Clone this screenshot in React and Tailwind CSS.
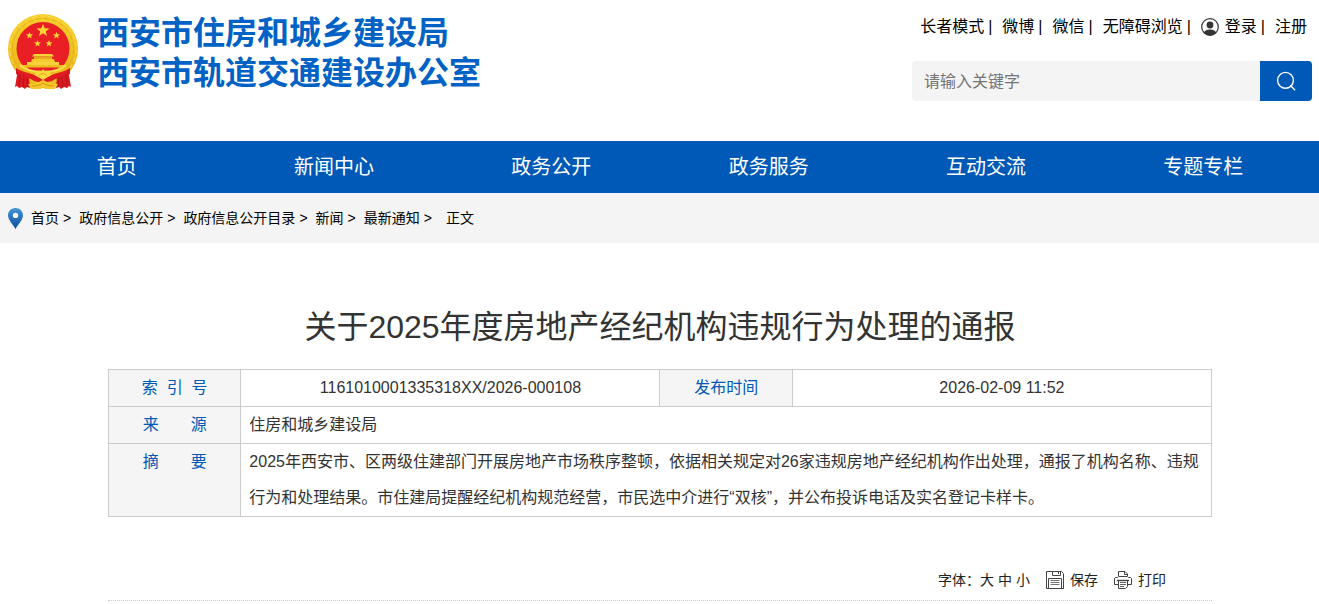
import { useState } from "react";

const NAV_ITEMS = ["首页", "新闻中心", "政务公开", "政务服务", "互动交流", "专题专栏"];

const CRUMBS = ["首页", "政府信息公开", "政府信息公开目录", "新闻", "最新通知"];

function Star({ x, y, r }) {
  const points = [];
  for (let i = 0; i < 10; i++) {
    const radius = i % 2 === 0 ? r : r * 0.42;
    const angle = (Math.PI / 5) * i - Math.PI / 2;
    points.push(
      `${(x + radius * Math.cos(angle)).toFixed(2)},${(y + radius * Math.sin(angle)).toFixed(2)}`
    );
  }
  return <polygon points={points.join(" ")} fill="#fbd534" />;
}

function Emblem() {
  return (
    <svg width="70" height="78" viewBox="0 0 70 78" aria-hidden="true">
      <defs>
        <linearGradient id="gold" x1="0" y1="0" x2="0" y2="1">
          <stop offset="0" stopColor="#f7cf2c" />
          <stop offset="0.6" stopColor="#f0c01f" />
          <stop offset="1" stopColor="#e5a816" />
        </linearGradient>
      </defs>
      <circle cx="35" cy="36" r="35" fill="url(#gold)" />
      <circle cx="35" cy="36" r="30.500" fill="none" stroke="#dba818" strokeWidth="0.8" strokeDasharray="6 2" />
      <circle cx="35" cy="36" r="33" fill="none" stroke="#fbe05a" strokeWidth="0.8" strokeDasharray="5 3" />
      <circle cx="35" cy="35.5" r="26.5" fill="#e91f25" />
      <Star x={35} y={17.5} r={6.8} />
      <Star x={21.5} y={22.5} r={3.8} />
      <Star x={48.5} y={22.5} r={3.8} />
      <Star x={29.5} y={30.5} r={3.6} />
      <Star x={41} y={30.5} r={3.6} />
      {/* gate tower */}
      <path d="M26 41h18l2 2.5H24z" fill="#f9d33a" />
      <path d="M26 43.500h18v3H26z" fill="#e3ad1c" />
      <path d="M24 46h22l1 3.500H23z" fill="#f6c92c" />
      <path d="M19 49h32v4.500H19z" fill="#f9d33a" />
      <path d="M19 53.500h32v1H19z" fill="#d4930e" />
      {/* lower wreath */}
      <path d="M10 52h50l-9 18-5 5H24l-5-5z" fill="#efbc20" />
      <path d="M19 54.500h32l-5 4H24z" fill="#e91f25" />
      <path d="M12 52c6 6 14 7 23 7s17-1 23-7" fill="none" stroke="#fadb48" strokeWidth="2" />
      {/* red swag and drapes */}
      <path d="M8 55c8 5 16 5 20 8l7 3 7-3c4-3 12-3 20-8v6c-7 4-13 3-18 7l-9 2-9-2c-5-4-11-3-18-7z" fill="#e01c22" />
      <path d="M8 55c3 6 7 8 13 9l1 11-3-1-2 2-3-2-3 1-2-2-2 1 2-12z" fill="#d81920" />
      <path d="M62 55c-3 6-7 8-13 9l-1 11 3-1 2 2 3-2 3 1 2-2 2 1-2-12z" fill="#d81920" />
      <path d="M12 62l-1 11M16 64l-1 10M19.500 66v8M58 62l1 11M54 64l1 10M50.500 66v8" stroke="#ae1118" strokeWidth="0.8" />
      {/* cog */}
      <path d="M27 62l1.500-3 2 .5 1-2 2 .5 1.500-2 1.500 2 2-.5 1 2 2-.5L43 62l-8 5z" fill="#fbd93c" />
      <path d="M31 63c1-3 7-3 8 0" fill="none" stroke="#d99a12" strokeWidth="0.8" />
      {/* lower gold ribbon */}
      <path d="M20 71c6 0 9-1 15-4 6 3 9 4 15 4l-3 5H37l-2-2-2 2H23z" fill="#f5c529" />
      <path d="M24 73c5 0 8-1 11-3 3 2 6 3 11 3" fill="none" stroke="#cf8a10" strokeWidth="0.8" />
    </svg>
  );
}

function UserIcon() {
  return (
    <svg width="18" height="18" viewBox="0 0 18 18" aria-hidden="true">
      <clipPath id="userClip">
        <circle cx="9" cy="9" r="8.500" />
      </clipPath>
      <circle cx="9" cy="7" r="3.400" fill="#333" />
      <ellipse cx="9" cy="15.500" rx="6.500" ry="4" fill="#333" clipPath="url(#userClip)" />
      <circle cx="9" cy="9" r="8.300" fill="none" stroke="#333" strokeWidth="1.200" />
    </svg>
  );
}

function SearchIcon() {
  return (
    <svg width="20" height="20" viewBox="0 0 20 20" fill="none" stroke="#fff" strokeWidth="1.400" aria-hidden="true">
      <circle cx="9.500" cy="9.300" r="7.900" />
      <path d="M14.700 14.700l4 4" strokeLinecap="round" />
    </svg>
  );
}

function PinIcon() {
  return (
    <svg width="15" height="21" viewBox="0 0 15 21" aria-hidden="true">
      <defs>
        <linearGradient id="pin" x1="0" y1="0" x2="0" y2="1">
          <stop offset="0" stopColor="#4795d6" />
          <stop offset="1" stopColor="#0a4d9c" />
        </linearGradient>
      </defs>
      <path
        fillRule="evenodd"
        fill="url(#pin)"
        d="M7.500 0C3.300 0 0 3.200 0 7.300 0 12 5 16.500 7.500 21 10 16.500 15 12 15 7.300 15 3.200 11.700 0 7.500 0zm0 4.700a2.700 2.700 0 1 1 0 5.400 2.700 2.700 0 0 1 0-5.400z"
      />
    </svg>
  );
}

function SaveIcon() {
  return (
    <svg width="18" height="18" viewBox="0 0 18 18" fill="none" stroke="#444" aria-hidden="true">
      <path d="M.500.500h15l2 2v15H.500z" />
      <path d="M6.500.500v4h8v-4" />
      <path d="M12.500 1v2" />
      <path d="M2.500 17.500v-10h13v10" />
      <path d="M4.500 9.500h9M4.500 11.500h9M4.500 13.500h9" stroke="#777" />
    </svg>
  );
}

function PrintIcon() {
  return (
    <svg width="18" height="18" viewBox="0 0 18 18" fill="none" stroke="#444" aria-hidden="true">
      <path d="M4.500 5V.500h6.500L13.500 3v2" />
      <path d="M10.500.500v3h3" />
      <path d="M4 13.500H.500V7.500l1-1h2l1-1h9l1 1h2l1 1v6H14" />
      <path d="M3 9.500h12" strokeWidth="1.400" />
      <path d="M4.500 9.500v8h7l2-2v-6" />
      <path d="M6 11.500h6M6 13.500h6M6 15.500h4" stroke="#666" />
    </svg>
  );
}

function TopLink({ children, last }) {
  return (
    <span className="flex items-center gap-1 whitespace-nowrap">
      <a href="#" className="flex items-center gap-1.5">
        {children}
      </a>
      {!last && <span>|</span>}
    </span>
  );
}

function App() {
  const [keyword, setKeyword] = useState("");
  const [size, setSize] = useState("text-base/9");

  const labelCell = "w-[12%] border border-[#ccc] bg-[#f5f5f5] px-2 text-center align-top font-normal text-[#0059b6]";
  const valueCell = "border border-[#ccc] px-2";

  return (
    <div className="min-h-screen bg-white font-['Liberation_Sans','Noto_Sans_CJK_SC',sans-serif] text-black" lang="zh-CN">
      <header className="flex items-start justify-between pt-[13px] pr-[7px] pb-10 pl-2">
        <a href="#" className="flex items-start gap-[19px]">
          <Emblem />
          <span className="text-[32px] leading-10 font-bold whitespace-nowrap text-[#0062c4]">
            西安市住房和城乡建设局
            <br />
            西安市轨道交通建设办公室
          </span>
        </a>
        <div className="w-[400px]">
          <div className="flex h-7 items-center justify-end gap-[10px] pr-[5px]">
            <TopLink>长者模式</TopLink>
            <TopLink>微博</TopLink>
            <TopLink>微信</TopLink>
            <TopLink>无障碍浏览</TopLink>
            <TopLink>
              <UserIcon />
              登录
            </TopLink>
            <TopLink last>注册</TopLink>
          </div>
          <form className="mt-5 flex h-10" onSubmit={(e) => e.preventDefault()}>
            <input
              type="text"
              aria-label="请输入关键字"
              placeholder="请输入关键字"
              value={keyword}
              onChange={(e) => setKeyword(e.target.value)}
              className="min-w-0 flex-1 rounded-l bg-[#f4f4f4] px-3 pt-0.5 outline-none placeholder:text-[#757575]"
            />
            <button type="submit" aria-label="搜索" className="flex w-[52px] items-center justify-center rounded-r bg-[#0059b6]">
              <SearchIcon />
            </button>
          </form>
        </div>
      </header>

      <nav className="flex h-13 items-center bg-[#0059b6] pr-[7px] pl-2 text-xl text-white">
        {NAV_ITEMS.map((item) => (
          <a key={item} href="#" className="flex-1 text-center">
            {item}
          </a>
        ))}
      </nav>

      <div className="flex h-[50px] items-center gap-2 bg-[#f4f4f4] px-2 text-sm">
        <PinIcon />
        {CRUMBS.map((item) => (
          <span key={item} className="flex gap-1">
            <a href="#">{item}</a>
            <span>&gt;</span>
          </span>
        ))}
        <span className="ml-1.5">正文</span>
      </div>

      <main className="pt-15 pr-[107px] pl-[108px]">
        <h1 className="text-center text-[32px] leading-12 text-[#333]">
          关于2025年度房地产经纪机构违规行为处理的通报
        </h1>

        <table className="mt-[18px] w-full table-fixed border-collapse leading-9 text-[#333]">
          <tbody>
            <tr>
              <th className={labelCell}>索&nbsp;&nbsp;引&nbsp;&nbsp;号</th>
              <td className={`w-[38%] text-center ${valueCell}`}>1161010001335318XX/2026-000108</td>
              <th className={labelCell}>发布时间</th>
              <td className={`w-[38%] text-center ${valueCell}`}>2026-02-09 11:52</td>
            </tr>
            <tr>
              <th className={labelCell}>来&#12288;&#12288;源</th>
              <td colSpan={3} className={valueCell}>住房和城乡建设局</td>
            </tr>
            <tr>
              <th className={labelCell}>摘&#12288;&#12288;要</th>
              <td colSpan={3} className={`${valueCell} ${size}`}>
                2025年西安市、区两级住建部门开展房地产市场秩序整顿，依据相关规定对26家违规房地产经纪机构作出处理，通报了机构名称、违规行为和处理结果。市住建局提醒经纪机构规范经营，市民选中介进行“双核”，并公布投诉电话及实名登记卡样卡。
              </td>
            </tr>
          </tbody>
        </table>

        <div className="mt-11 flex h-10 items-center justify-end gap-4 border-b border-dotted border-[#ccc] pr-[46px] pb-0.5 text-sm text-[#222]">
          <div className="flex">
            <span>字体：</span>
            <div className="flex gap-1">
              <button type="button" onClick={() => setSize("text-xl/9")}>大</button>
              <button type="button" onClick={() => setSize("text-lg/9")}>中</button>
              <button type="button" onClick={() => setSize("text-base/9")}>小</button>
            </div>
          </div>
          <button type="button" className="flex items-center gap-1.5">
            <SaveIcon />
            保存
          </button>
          <button type="button" className="flex items-center gap-1.5" onClick={() => window.print()}>
            <PrintIcon />
            打印
          </button>
        </div>
      </main>
    </div>
  );
}

export default App;
